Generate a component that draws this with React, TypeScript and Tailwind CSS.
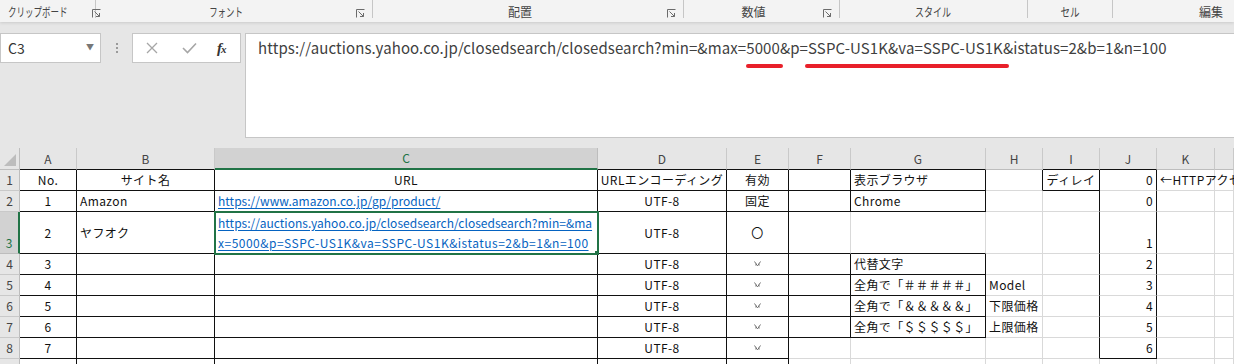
import type { ReactNode } from 'react'

const jp = "font-['Noto_Sans_CJK_JP','Noto_Sans',sans-serif]"

// kana labels in the ribbon are set in a narrow UI face, so they get squeezed
const groups = [
  { label: 'クリップボード', w: 'w-[96px]', launcher: true, left: true, sq: 'scale-x-[0.71] origin-left' },
  { label: 'フォント', w: 'w-[277px]', launcher: true, sq: 'scale-x-[0.7]' },
  { label: '配置', w: 'w-[311px]', launcher: true, sq: '' },
  { label: '数値', w: 'w-[156px]', launcher: true, sq: '' },
  { label: 'スタイル', w: 'w-[188px]', sq: 'scale-x-[0.75]' },
  { label: 'セル', w: 'w-[85px]', sq: 'scale-x-[0.8]' },
  { label: '編集', w: 'w-[158px]', last: true, sq: '' },
]

const cols = ['A', 'B', 'C', 'D', 'E', 'F', 'G', 'H', 'I', 'J', 'K', '']

type Cell = { t?: ReactNode; a?: 'l' | 'c' | 'r'; v?: 'c' | 'b' | 't'; link?: boolean; nowrap?: boolean }

function Launcher() {
  return (
    <svg width="9" height="9" viewBox="0 0 9 9" className="shrink-0 text-[#6b6b6b]">
      <path d="M0.5 8.5V0.5H8.5" fill="none" stroke="currentColor" />
      <path d="M2.5 2.5L7.5 7.5M7.5 4V7.5H4" fill="none" stroke="currentColor" />
    </svg>
  )
}

function Tick() {
  return (
    <svg width="7" height="6" viewBox="0 0 7 6" className="text-[#6f6f6f]">
      <path d="M0.5 0.5L3.5 5M6.5 0.5L3.5 5M1.2 4.2L2.6 3M5.8 4.2L4.4 3" fill="none" stroke="currentColor" strokeWidth="1" />
    </svg>
  )
}

const utf = (): Cell => ({ t: 'UTF-8', a: 'c' })
const tick = (): Cell => ({ t: <Tick />, a: 'c', v: 't' })
const n = (s: string): Cell => ({ t: s, a: 'r', v: 'b' })

const rows: Cell[][] = [
  [{ t: 'No.', a: 'c' }, { t: 'サイト名', a: 'c' }, { t: 'URL', a: 'c' }, { t: 'URLエンコーディング', a: 'c' }, { t: '有効', a: 'c' }, {}, { t: '表示ブラウザ' }, {}, { t: 'ディレイ', a: 'c' }, n('0'), { t: '←HTTPアクセス間隔（秒）', nowrap: true }, {}],
  [{ t: '1', a: 'c' }, { t: 'Amazon' }, { t: 'https://www.amazon.co.jp/gp/product/', link: true }, utf(), { t: '固定', a: 'c' }, {}, { t: 'Chrome' }, {}, {}, n('0'), {}, {}],
  [
    { t: '2', a: 'c' },
    { t: 'ヤフオク' },
    {
      t: (
        <>
          https://auctions.yahoo.co.jp/closedsearch/closedsearch?min=&amp;ma
          <br />
          <span className="tracking-[0.5px]">x=5000&amp;p=SSPC-US1K&amp;va=SSPC-US1K&amp;istatus=2&amp;b=1&amp;n=100</span>
        </>
      ),
      link: true,
      nowrap: true,
    },
    utf(),
    { t: '〇', a: 'c' },
    {},
    {},
    {},
    {},
    n('1'),
    {},
    {},
  ],
  [{ t: '3', a: 'c' }, {}, {}, utf(), tick(), {}, { t: '代替文字' }, {}, {}, n('2'), {}, {}],
  [{ t: '4', a: 'c' }, {}, {}, utf(), tick(), {}, { t: '全角で「＃＃＃＃＃」' }, { t: 'Model' }, {}, n('3'), {}, {}],
  [{ t: '5', a: 'c' }, {}, {}, utf(), tick(), {}, { t: '全角で「＆＆＆＆＆」' }, { t: '下限価格' }, {}, n('4'), {}, {}],
  [{ t: '6', a: 'c' }, {}, {}, utf(), tick(), {}, { t: '全角で「＄＄＄＄＄」' }, { t: '上限価格' }, {}, n('5'), {}, {}],
  [{ t: '7', a: 'c' }, {}, {}, utf(), tick(), {}, {}, {}, {}, n('6'), {}, {}],
  [{ t: '8', a: 'c' }, {}, {}, utf(), {}, {}, {}, {}, {}, {}, {}, {}],
]

// which edges get the black table border (r = row 1..9, c = column index 0..11)
function blackRight(r: number, c: number) {
  if (c <= 4) return true
  if (c === 5 || c === 6) return r !== 3 && r <= 7
  if (c === 7) return r === 1
  if (c === 8 || c === 9) return r <= 8
  return false
}
function blackBottom(r: number, c: number) {
  if (c <= 4) return true
  if (c === 5 || c === 6) return r <= 7
  if (c === 8) return r === 1
  if (c === 9) return r === 8
  return false
}
const topBlack = (c: number) => c <= 6 || c === 8 || c === 9

export default function App() {
  return (
    <div className={`w-[1234px] h-[364px] overflow-hidden bg-white ${jp}`}>
      {/* ribbon group labels */}
      <div className="flex h-[22px] bg-[#f3f3f3] shadow-[0_1px_3px_rgba(0,0,0,0.12)] relative z-10 text-[12px] text-[#444]">
        {groups.map((g) => (
          <div key={g.label} className={`${g.w} shrink-0 flex items-start ${g.last ? '' : 'border-r border-r-[#c6c6c6]'} h-[18px]`}>
            <span className={`leading-[18px] pt-[3px] whitespace-nowrap ${g.left ? 'pl-[8px] flex-1' : 'flex-1 text-center'} ${g.last ? 'pl-[38px]' : ''}`}>
              <span className={`inline-block ${g.sq}`}>{g.label}</span>
            </span>
            {g.launcher && (
              <span className="pt-[9px] pr-[7px]">
                <Launcher />
              </span>
            )}
          </div>
        ))}
      </div>

      {/* formula bar */}
      <div className="bg-[#e6e6e6] h-[126px] pt-[11px] flex items-start">
        <div className="w-[101px] h-[30px] bg-white border border-[#c6c6c6] flex items-center pl-[7px] pr-[6px] text-[14px] text-[#333]">
          <span className="flex-1 pt-[1px]">C3</span>
          <span className="text-[8px] text-[#777] -mt-[3px]">▼</span>
        </div>
        <div className="w-[31px] h-[30px] flex items-center justify-center">
          <div className="flex flex-col gap-[2px]">
            <span className="w-[2px] h-[2px] bg-[#9a9a9a]" />
            <span className="w-[2px] h-[2px] bg-[#9a9a9a]" />
            <span className="w-[2px] h-[2px] bg-[#9a9a9a]" />
          </div>
        </div>
        <div className="w-[109px] h-[30px] bg-white border border-[#c6c6c6] flex items-center text-[#a6a6a6]">
          <svg width="12" height="12" viewBox="0 0 12 12" className="ml-[13px]">
            <path d="M1 1L11 11M11 1L1 11" stroke="currentColor" strokeWidth="1.3" />
          </svg>
          <svg width="15" height="12" viewBox="0 0 15 12" className="ml-[24px]">
            <path d="M1 6L5.5 10.5L14 1.5" fill="none" stroke="currentColor" strokeWidth="1.6" />
          </svg>
          <span className="ml-[20px] font-['Liberation_Serif',serif] italic font-bold text-[15px] text-[#333] tracking-[-1px]">
            f<span className="text-[11px]">x</span>
          </span>
        </div>
        <div className="ml-[4px] flex-1 h-[105px] bg-white border border-[#c6c6c6] border-r-0 pl-[12px] pt-[3px] text-[15px] text-[#404040] tracking-[0.1px] whitespace-nowrap">
          https://auctions.yahoo.co.jp/closedsearch/closedsearch?min=&amp;max=
          <span className="relative">
            5000
            <span className="absolute left-0 -right-[3px] top-[27px] h-[4px] rounded-full bg-[#e8202a]" />
          </span>
          &amp;p=
          <span className="relative">
            SSPC-US1K&amp;va=SSPC-US1K
            <span className="absolute -left-[3px] -right-[6px] top-[27px] h-[4px] rounded-full bg-[#e8202a]" />
          </span>
          &amp;istatus=2&amp;b=1&amp;n=100
        </div>
      </div>

      {/* sheet */}
      <div className="grid grid-cols-[20px_57px_138px_383px_129px_62px_62px_135px_57px_57px_57px_58px_1fr] grid-rows-[22px_21px_21px_42px_21px_21px_21px_21px_21px_21px] text-[12px] text-[#111]">
        {/* column header */}
        <div className="bg-[#e6e6e6] border-r border-b border-[#bdbdbd] flex items-end justify-end p-[3px]">
          <svg width="12" height="12" viewBox="0 0 12 12">
            <path d="M12 0V12H0Z" fill="#bdbdbd" />
          </svg>
        </div>
        {cols.map((c, i) =>
          i === 2 ? (
            <div key={c} className="bg-[#d2d2d2] border-r border-r-[#bdbdbd] border-b-2 border-b-[#217346] flex items-center justify-center text-[#217346]">
              {c}
            </div>
          ) : (
            <div key={i} className={`bg-[#e6e6e6] border-r border-r-[#c9c9c9] border-b ${topBlack(i) ? 'border-b-[#111]' : 'border-b-[#bdbdbd]'} flex items-center justify-center text-[#444]`}>
              {c}
            </div>
          ),
        )}

        {rows.map((row, ri) => {
          const r = ri + 1
          return [
            <div
              key={`h${r}`}
              className={
                r === 3
                  ? 'bg-[#d2d2d2] border-r-2 border-r-[#217346] border-b border-b-[#bdbdbd] flex items-end justify-center pb-[1px] text-[#217346]'
                  : 'bg-[#e6e6e6] border-r border-r-[#bdbdbd] border-b border-b-[#c9c9c9] flex items-end justify-center pb-[1px] text-[#444]'
              }
            >
              {r}
            </div>,
            ...row.map((cell, c) => {
              const sel = r === 3 && c === 2
              const al = cell.a === 'c' ? 'justify-center' : cell.a === 'r' ? 'justify-end pr-[3px]' : 'justify-start pl-[3px]'
              const va = cell.v === 'b' ? 'items-end pb-[1px]' : cell.v === 't' ? 'items-start pt-[7px]' : 'items-center'
              return (
                <div
                  key={`${r}-${c}`}
                  className={`relative flex ${al} ${va} border-r border-b ${blackRight(r, c) ? 'border-r-[#111]' : 'border-r-[#d9d9d9]'} ${
                    blackBottom(r, c) ? 'border-b-[#111]' : 'border-b-[#d9d9d9]'
                  } ${sel ? 'outline-2 outline-[#217346] -outline-offset-1 z-10' : ''} ${
                    cell.nowrap ? 'whitespace-nowrap' : ''
                  } ${cell.nowrap && !sel ? 'overflow-visible z-10' : 'overflow-hidden'}`}
                >
                  {cell.link ? (
                    <span className={`text-[#0563c1] underline underline-offset-[2px] tracking-[0.02px] ${sel ? 'leading-[20px]' : ''}`}>{cell.t}</span>
                  ) : (
                    <span className="tracking-[0.4px]">{cell.t}</span>
                  )}
                  {sel && <span className="absolute -right-[4px] -bottom-[4px] w-[7px] h-[7px] bg-[#217346] border border-white z-20" />}
                </div>
              )
            }),
          ]
        })}
      </div>
    </div>
  )
}
